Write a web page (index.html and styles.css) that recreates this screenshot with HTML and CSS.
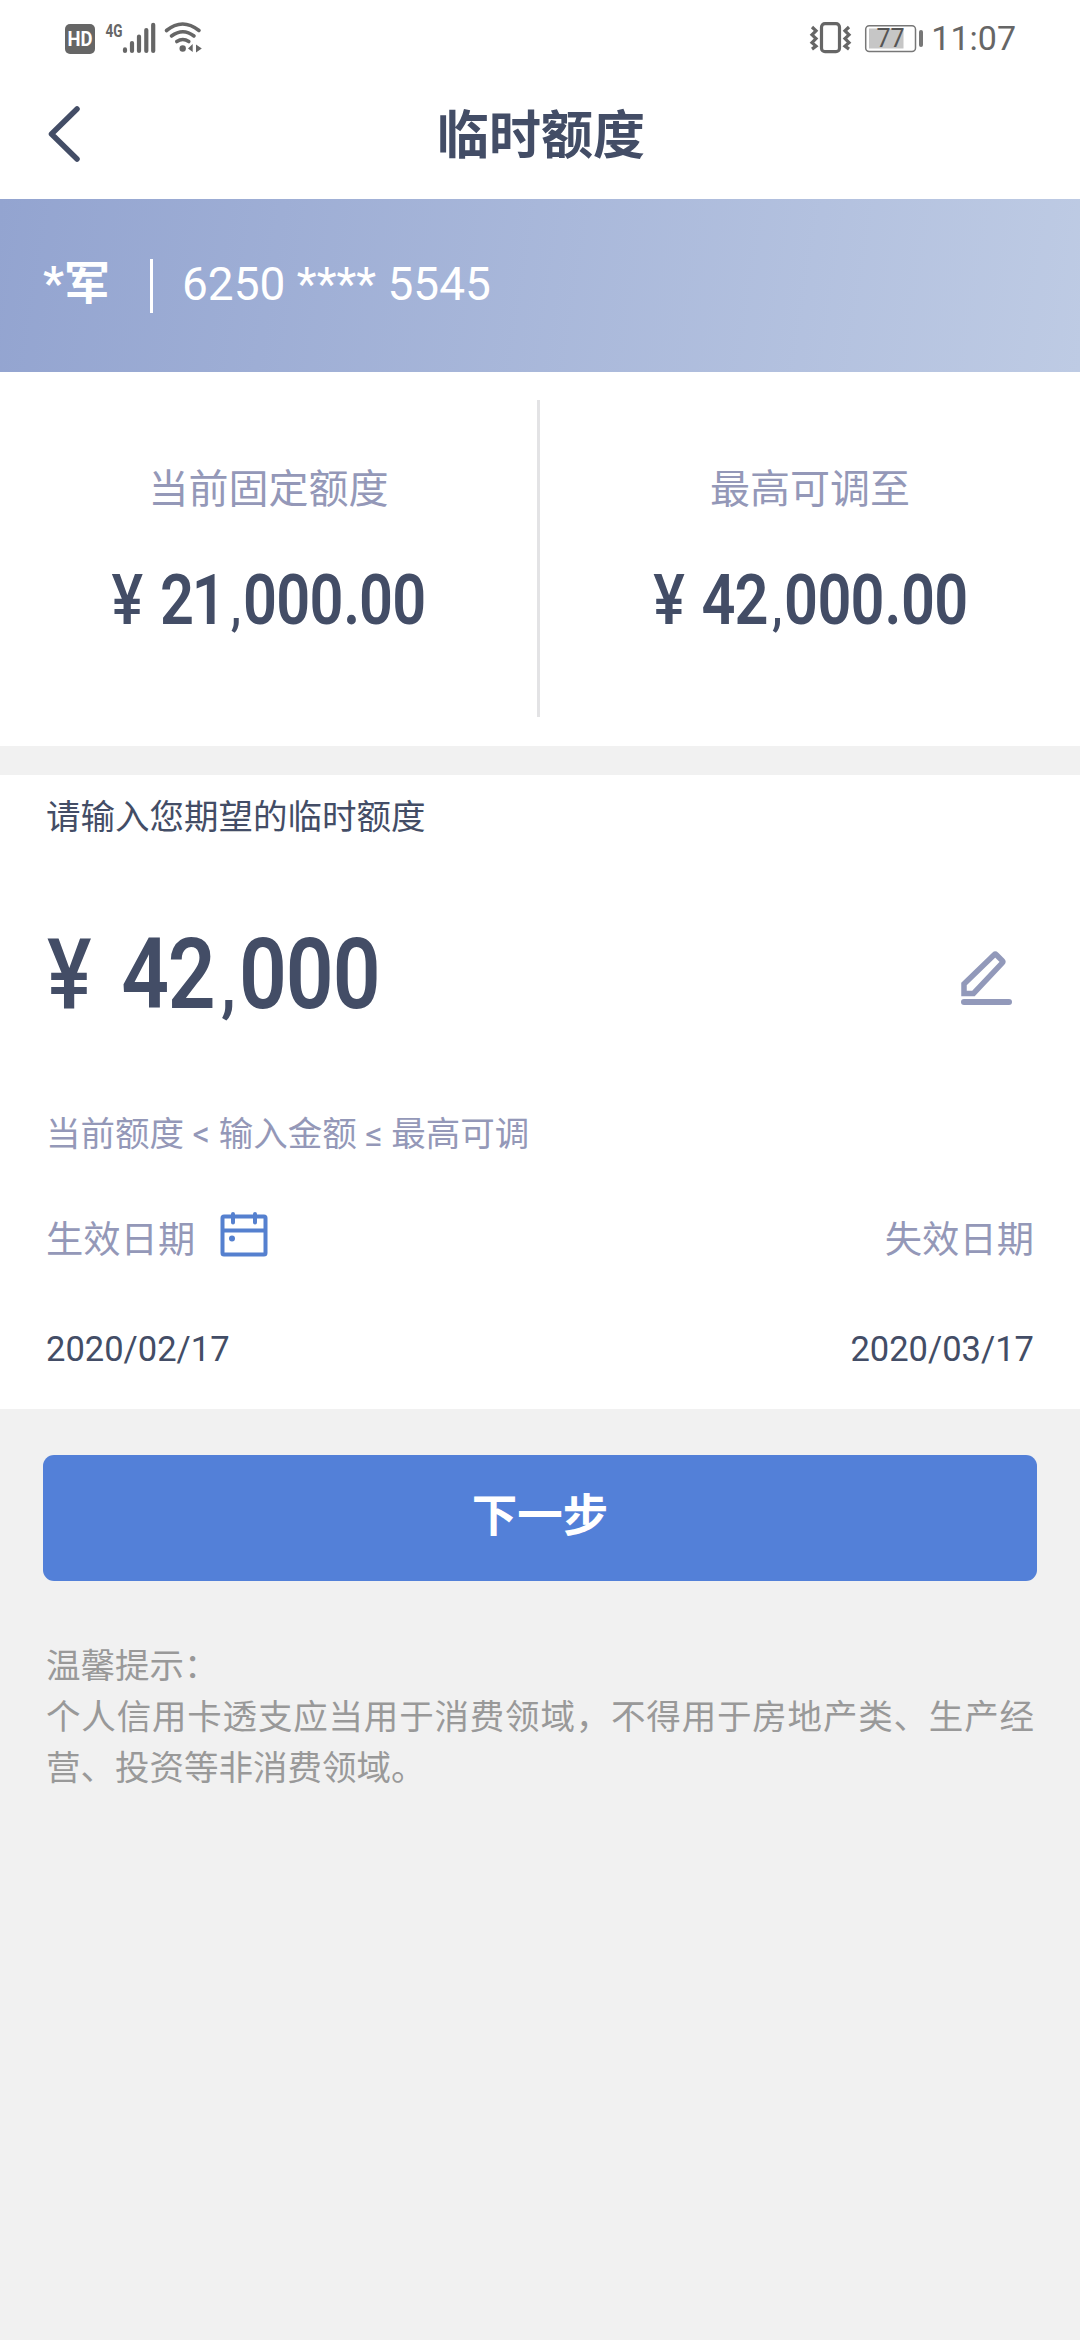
FILE: index.html
```html
<!DOCTYPE html>
<html lang="zh-CN">
<head>
<meta charset="utf-8">
<title>临时额度</title>
<link rel="stylesheet" href="styles.css">
</head>
<body>
<div class="statusbar">
  <svg class="status-left" viewBox="60 12 130 50" width="130" height="50">
    <rect x="65" y="23" width="30" height="30" rx="5" fill="#666"/>
    <text class="hd" x="80" y="44.5" text-anchor="middle" textLength="25" lengthAdjust="spacingAndGlyphs">HD</text>
    <text class="net" x="105.5" y="35.5" textLength="17" lengthAdjust="spacingAndGlyphs">4G</text>
    <g stroke="#666" stroke-width="4.2" stroke-linecap="round">
      <path d="M125 48.4V50M132 42v8M139 35.500v14.500M146.300 29v21M153.200 23.800V50"/>
    </g>
  </svg>
  <svg class="status-wifi" viewBox="160 18 44 40" width="44" height="40">
    <g fill="none" stroke="#666" stroke-width="3.6" stroke-linecap="round">
      <path d="M166.500 30.500q16-13 32.500 0M171.500 36q11.500-8.500 22.500 0M176.800 41.500q6-4 12 0"/>
    </g>
    <circle cx="182.700" cy="48.500" r="3.200" fill="#666"/>
    <path d="M188 48.500l4.700-4.500v8zM196 44.500l5.800 4-5.800 4z" fill="#666"/>
  </svg>
  <span class="spacer"></span>
  <svg class="status-right" viewBox="806 16 120 42" width="120" height="42">
    <g fill="none" stroke="#666" stroke-width="3.2">
      <rect x="820.500" y="22.700" width="18" height="28" rx="3.500"/>
      <path d="M811 26l4 3.800-4 4 4 3.800-4 4 4 3.500-4 3M848 26l-4 3.800 4 4-4 3.800 4 4-4 3.500 4 3"/>
    </g>
    <rect x="864.700" y="24.700" width="49.800" height="25.800" rx="3.500" fill="#fff" stroke="#777" stroke-width="1.500"/>
    <rect x="868" y="27.500" width="34.500" height="20" fill="#c6c6c6"/>
    <text class="battery" x="889.500" y="46" text-anchor="middle">77</text>
    <rect x="918" y="29" width="4" height="17" rx="2" fill="#777"/>
  </svg>
  <span class="clock">11:07</span>
</div>

<header class="nav">
  <svg class="back" viewBox="0 0 40 64" width="40" height="64">
    <path d="M35 7L9.500 32 35 57" fill="none" stroke="#434d66" stroke-width="5.500" stroke-linecap="round" stroke-linejoin="round"/>
  </svg>
  <h1 class="title">临时额度</h1>
</header>

<section class="card">
  <span class="holder">*军</span>
  <span class="bar"></span>
  <span class="number">6250 **** 5545</span>
</section>

<section class="limits">
  <div class="limit">
    <div class="limit-label">当前固定额度</div>
    <svg class="amount" viewBox="0 0 538 80" width="538" height="80">
      <text class="digits" transform="scale(.85 1)" y="65" x="149.900 208.200 245.500 277.600 305.900 344.900 384 413.700 442.300 481.600"><tspan class="yen">¥</tspan>21<tspan class="comma">,</tspan>000.00</text>
    </svg>
  </div>
  <div class="rule"></div>
  <div class="limit">
    <div class="limit-label">最高可调至</div>
    <svg class="amount" viewBox="0 0 540 80" width="540" height="80">
      <text class="digits" transform="scale(.85 1)" y="65" x="151.900 209.900 248.700 279 307 346.400 385.300 415.300 444.700 483.800"><tspan class="yen">¥</tspan>42<tspan class="comma">,</tspan>000.00</text>
    </svg>
  </div>
</section>

<section class="form">
  <div class="prompt">请输入您期望的临时额度</div>
  <div class="entry">
    <svg class="wanted" viewBox="0 0 480 120" width="480" height="120">
      <text class="digits big" transform="scale(.86 1)" y="101" x="80.600 169 223 265.500 305.800 360 414.900"><tspan class="yen">¥</tspan>42<tspan class="comma">,</tspan>000</text>
    </svg>
    <svg class="edit" viewBox="0 0 54 58" width="54" height="58">
      <path d="M5 43.500V34L35.200 4.800a1.500 1.500 0 0 1 2.100 0l6 6a1.500 1.500 0 0 1 0 2.100L14.500 43.500z" fill="none" stroke="#9299ba" stroke-width="5.500"/>
      <path d="M5 52h45" stroke="#9299ba" stroke-width="6" stroke-linecap="round"/>
    </svg>
  </div>
  <div class="hint">当前额度 &lt; 输入金额 ≤ 最高可调</div>
  <div class="row labels">
    <span>生效日期</span>
    <svg class="calendar" viewBox="0 0 48 48" width="48" height="48">
      <g fill="none" stroke="#5580cf" stroke-width="4">
        <rect x="2.500" y="6.500" width="43" height="38" rx="1.500"/>
        <path d="M2.500 20.500h43"/>
        <path d="M13 4v8.500M35 4v8.500" stroke-linecap="round"/>
      </g>
      <circle cx="12" cy="28.500" r="3" fill="#5580cf"/>
    </svg>
    <span class="end">失效日期</span>
  </div>
  <div class="row dates">
    <span>2020/02/17</span>
    <span class="end">2020/03/17</span>
  </div>
</section>

<button class="next" type="button">下一步</button>

<div class="tips">
  <p>温馨提示：</p>
  <p>个人信用卡透支应当用于消费领域，不得用于房地产类、生产经营、投资等非消费领域。</p>
</div>
</body>
</html>
```
FILE: styles.css
```css
* { box-sizing: border-box; }

body {
  margin: 0;
  min-height: 2340px;
  background: #f1f1f1;
  color: #434d66;
  font-family: Roboto, "Noto Sans CJK SC", sans-serif;
}

svg { display: block; flex: none; }

.statusbar {
  display: flex;
  align-items: center;
  height: 69px;
  padding: 6px 64px 0 60px;
  background: #fff;
}
.status-left, .status-wifi, .status-right { overflow: visible; }
.status-wifi { margin-left: -30px; }
.spacer { flex: 1; }
.hd { font: 700 20px Roboto, sans-serif; fill: #fff; }
.net { font: 700 19px Roboto, sans-serif; fill: #666; }
.battery { font: 400 25px Roboto, sans-serif; fill: #555; }
.clock {
  margin-left: 4px;
  font-size: 34px;
  line-height: 40px;
  color: #666;
}

.nav {
  display: grid;
  grid-template-columns: 120px 1fr 118px;
  align-items: center;
  height: 130px;
  background: #fff;
}
.back { margin-left: 42px; }
.title {
  margin: 0;
  padding-top: 5px;
  text-align: center;
  font-size: 52px;
  font-weight: 700;
  line-height: 80px;
}

.card {
  display: flex;
  align-items: center;
  height: 173px;
  padding-left: 43px;
  background: linear-gradient(99deg, #93a4d0 0%, #becbe4 100%);
  color: #fff;
  font-size: 46px;
  line-height: 60px;
}
.holder { width: 107px; padding-bottom: 5px; font-weight: 700; }
.bar { width: 3px; height: 54px; background: #fff; }
.number { margin-left: 29px; padding-bottom: 3px; }

.limits {
  display: grid;
  grid-template-columns: 537px 3px 540px;
  height: 374px;
  padding: 28px 0 29px;
  background: #fff;
}
.rule { background: #e3e3e5; }
.limit { padding-top: 60px; }
.limit-label {
  font-size: 40px;
  line-height: 60px;
  text-align: center;
  color: #9498b8;
}
.amount { margin-top: 39px; overflow: visible; }
.digits {
  font-family: Roboto, sans-serif;
  font-size: 70px;
  font-weight: 560;
  text-anchor: middle;
  fill: #434d66;
}
.big { font-size: 97.5px; }
.yen { font-weight: 480; }
.comma { font-size: .75em; }
.wanted { overflow: visible; }

.form {
  height: 634px;
  margin-top: 29px;
  background: #fff;
}
.prompt {
  padding: 12px 46px 10px;
  font-size: 34.5px;
  line-height: 60px;
}
.entry {
  display: flex;
  justify-content: space-between;
  align-items: center;
  height: 220px;
  padding-right: 67px;
}
.edit { margin-top: 23px; }
.hint {
  margin-top: 27px;
  padding: 0 46px;
  font-size: 34.5px;
  line-height: 60px;
  color: #9498b8;
}
.row {
  display: flex;
  align-items: center;
  height: 60px;
  padding: 0 46px;
  line-height: 60px;
}
.end { margin-left: auto; }
.labels {
  margin-top: 46px;
  font-size: 37.3px;
  color: #9498b8;
}
.calendar { margin: -13px 0 0 25px; }
.dates { margin-top: 49px; font-size: 34.5px; }

.next {
  display: block;
  width: 994px;
  height: 126px;
  margin: 46px 43px 0;
  padding: 0 0 2px;
  border: 0;
  border-radius: 11px;
  background: #5380d8;
  color: #fff;
  font: 700 45.5px/60px Roboto, "Noto Sans CJK SC", sans-serif;
}

.tips {
  margin: 60px 46px 0;
  font-size: 34.5px;
  line-height: 51px;
  color: #999;
  text-align: justify;
}
.tips p { margin: 0; }
```
